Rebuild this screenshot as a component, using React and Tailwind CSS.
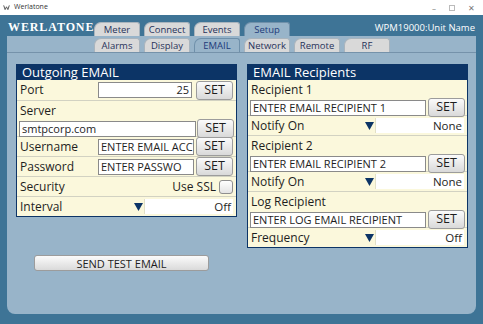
const FONT = "font-['Open_Sans',sans-serif]";

const TOP_TABS = [
  { label: 'Meter' },
  { label: 'Connect' },
  { label: 'Events' },
  { label: 'Setup', active: true },
];

const SUB_TABS = [
  { label: 'Alarms' },
  { label: 'Display' },
  { label: 'EMAIL', active: true },
  { label: 'Network' },
  { label: 'Remote' },
  { label: 'RF' },
];

function Tab({ label, active }) {
  return (
    <div
      className={`w-[46px] h-[14px] rounded-tl-[7px] rounded-tr-[3px] border border-b-0 flex items-center justify-center text-[9.5px] leading-none whitespace-nowrap ${
        active
          ? 'bg-[#98b4c9] border-[#6f90aa] text-[#1d3b7a]'
          : 'bg-[#d9d9d9] border-[#a9b4bd] text-[#27325a]'
      }`}
    >
      {label}
    </div>
  );
}

function SetButton() {
  return (
    <button
      type="button"
      className="w-[37px] h-[19px] shrink-0 rounded-[3px] border border-[#9c9c9c] bg-gradient-to-b from-[#fbfbfb] to-[#d9d9d9] text-[12.5px] leading-none text-[#1e1e1e]"
    >
      SET
    </button>
  );
}

function Field({ value, className = '', right }) {
  return (
    <div
      className={`h-[16px] bg-white border border-[#8a8a8a] px-[2px] text-[11px] leading-[14px] text-[#1e1e1e] whitespace-nowrap overflow-hidden ${
        right ? 'text-right' : ''
      } ${className}`}
    >
      {value}
    </div>
  );
}

function Dropdown({ value, width }) {
  return (
    <div className="flex items-center">
      <svg width="9" height="8" viewBox="0 0 9 8" className="mr-[1px]">
        <path d="M0 0 H9 L4.5 8 Z" fill="#0c3466" />
      </svg>
      <div className={`h-[15px] bg-white border-l border-[#e2e0c8] text-right pr-[2px] text-[11.5px] leading-[15px] text-[#1e1e1e] ${width}`}>
        {value}
      </div>
    </div>
  );
}

function Row({ h, children, last }) {
  return (
    <div
      className={`${h} flex items-center justify-between px-[3px] text-[12px] text-[#1e1e1e] ${
        last ? '' : 'border-b border-[#d2d2c2]'
      }`}
    >
      {children}
    </div>
  );
}

function StackRow({ label, value, inputW }) {
  return (
    <div className="h-[36px] flex flex-col px-[2px] pt-[3px] border-b border-[#d2d2c2] text-[12px] text-[#1e1e1e]">
      <div className="leading-[14px] pl-[1px]">{label}</div>
      <div className="flex items-center justify-between mt-[1px]">
        <Field value={value} className={inputW} />
        <SetButton />
      </div>
    </div>
  );
}

function Box({ title, children }) {
  return (
    <div className="w-[221px] border border-[#0c3466] bg-[#fbf8dc]">
      <div className="h-[15px] bg-[#0c3466] text-white text-[13px] leading-[15px] pl-[5px]">{title}</div>
      {children}
    </div>
  );
}

export default function App() {
  return (
    <div className={`w-[483px] h-[324px] bg-[#3e7496] flex flex-col ${FONT}`}>
      {/* window title bar */}
      <div className="h-[15px] bg-white flex items-center pl-[3px] text-[7px] text-[#333]">
        <svg width="7" height="7" viewBox="0 0 10 10" className="mr-[4px]">
          <path d="M1 2 L3 8 L5 4 L7 8 L9 2" stroke="#555" strokeWidth="1.4" fill="none" />
        </svg>
        <span>Werlatone</span>
        <div className="ml-auto flex items-center gap-[13px] pr-[8px] text-[#777] text-[8px]">
          <span>–</span>
          <span className="inline-block w-[6px] h-[6px] border border-[#bbb]" />
          <span>✕</span>
        </div>
      </div>

      {/* header with logo and top tabs */}
      <div className="h-[21px] flex items-end">
        <div className="w-[94px] shrink-0 h-[21px] flex items-center pl-[8px] pt-[2px] font-['Liberation_Serif',serif] font-bold text-white text-[12px] tracking-[0.9px] whitespace-nowrap">
          WERLATONE
        </div>
        <div className="flex gap-[4px]">
          {TOP_TABS.map((t) => (
            <Tab key={t.label} {...t} />
          ))}
        </div>
        <div className="ml-auto self-center pr-[8px] pt-[5px] text-white text-[9.5px]">WPM19000:Unit Name</div>
      </div>

      {/* main panel */}
      <div className="mx-[7px] mb-[10px] flex-1 bg-[#98b4c9] rounded-b-[8px] flex flex-col">
        <div className="h-[17px] flex items-end pl-[87px] border-b border-[#7592aa]">
          <div className="flex gap-[4px]">
            {SUB_TABS.map((t) => (
              <Tab key={t.label} {...t} />
            ))}
          </div>
        </div>

        <div className="flex gap-[10px] pl-[9px] pt-[11px]">
          <div className="flex flex-col">
            <Box title="Outgoing EMAIL">
              <Row h="h-[21px]">
                <span>Port</span>
                <div className="flex items-center gap-[4px]">
                  <Field value="25" right className="w-[94px]" />
                  <SetButton />
                </div>
              </Row>
              <StackRow label="Server" value="smtpcorp.com" inputW="w-[177px]" />
              <Row h="h-[20px]">
                <span>Username</span>
                <div className="flex items-center gap-[2px]">
                  <Field value="ENTER EMAIL ACC" className="w-[96px]" />
                  <SetButton />
                </div>
              </Row>
              <Row h="h-[20px]">
                <span>Password</span>
                <div className="flex items-center gap-[2px]">
                  <Field value="ENTER PASSWO" className="w-[96px]" />
                  <SetButton />
                </div>
              </Row>
              <Row h="h-[20px]">
                <span>Security</span>
                <div className="flex items-center gap-[3px]">
                  <span>Use SSL</span>
                  <span className="w-[14px] h-[14px] rounded-[3px] border border-[#8f8f8f] bg-gradient-to-b from-white to-[#e4e4e4]" />
                </div>
              </Row>
              <Row h="h-[19px]" last>
                <span>Interval</span>
                <Dropdown value="Off" width="w-[89px]" />
              </Row>
            </Box>

            <button
              type="button"
              className="mt-[38px] ml-[18px] w-[175px] h-[16px] rounded-[3px] border border-[#9c9c9c] bg-gradient-to-b from-[#fbfbfb] to-[#dadada] text-[11px] leading-none text-[#1e1e1e]"
            >
              SEND TEST EMAIL
            </button>
          </div>

          <div>
            <Box title="EMAIL Recipients">
              <StackRow label="Recipient 1" value="ENTER EMAIL RECIPIENT 1" inputW="w-[176px]" />
              <Row h="h-[20px]">
                <span>Notify On</span>
                <Dropdown value="None" width="w-[89px]" />
              </Row>
              <StackRow label="Recipient 2" value="ENTER EMAIL RECIPIENT 2" inputW="w-[176px]" />
              <Row h="h-[20px]">
                <span>Notify On</span>
                <Dropdown value="None" width="w-[89px]" />
              </Row>
              <StackRow label="Log Recipient" value="ENTER LOG EMAIL RECIPIENT" inputW="w-[176px]" />
              <Row h="h-[19px]" last>
                <span>Frequency</span>
                <Dropdown value="Off" width="w-[89px]" />
              </Row>
            </Box>
          </div>
        </div>
      </div>
    </div>
  );
}
